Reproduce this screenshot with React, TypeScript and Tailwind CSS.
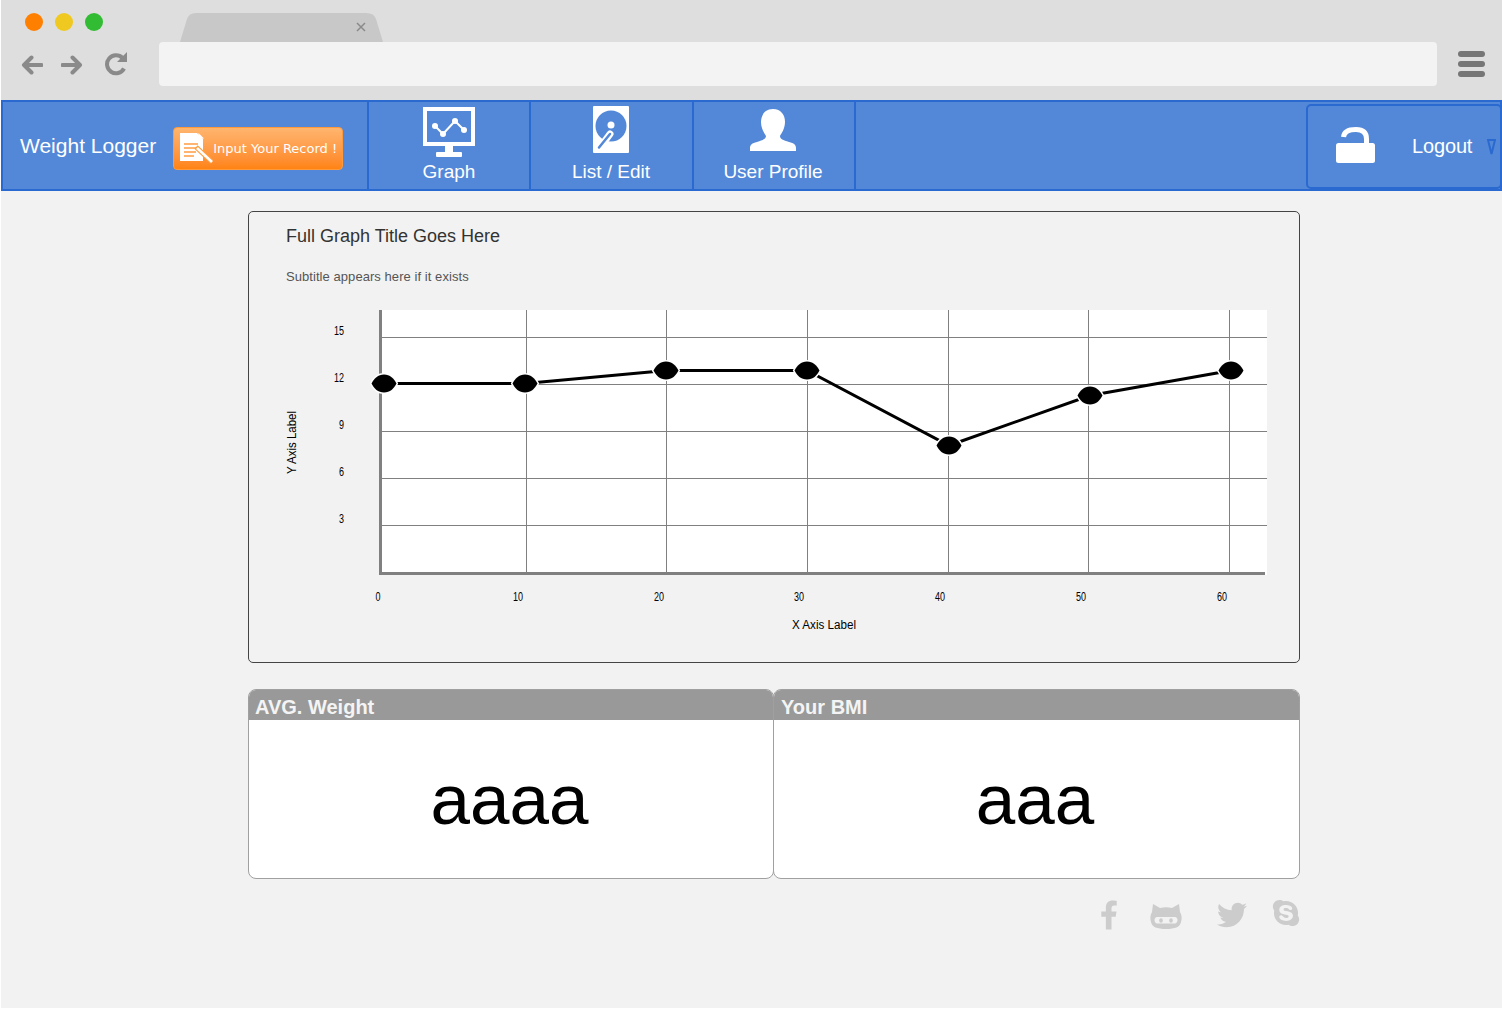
import { FaFacebookF, FaTwitter, FaSkype } from "react-icons/fa";

const pts: [number, number][] = [[4, 73.5], [145, 73.5], [286, 60.5], [427, 60.5], [569, 135.5], [710, 85.5], [851, 60.5]];
const vLines = [146.5, 286.5, 427.5, 568.5, 708.5, 849.5];
const hLines = [27.5, 74.5, 121.5, 168.5, 215.5];
const yTicks: [string, number][] = [["15", 24.5], ["12", 71.5], ["9", 118.5], ["6", 165.5], ["3", 212.5]];
const xTicks: [string, number][] = [["0", -2], ["10", 138], ["20", 279], ["30", 419], ["40", 560], ["50", 701], ["60", 842]];

function Chart() {
  return (
    <svg width="1000" height="340" viewBox="-94 0 1000 340" className="block" style={{ fontFamily: '"Liberation Sans", sans-serif' }}>
      <rect x="0" y="0" width="887" height="265" fill="#ffffff" />
      {vLines.map((x) => (
        <line key={x} x1={x} x2={x} y1="0" y2="263" stroke="#808080" strokeWidth="1" />
      ))}
      {hLines.map((y) => (
        <line key={y} x1="0" x2="887" y1={y} y2={y} stroke="#808080" strokeWidth="1" />
      ))}
      <rect x="-1" y="0" width="3" height="265" fill="#808080" />
      <rect x="-1" y="262" width="886" height="3" fill="#808080" />
      <polyline points={pts.map((p) => p.join(",")).join(" ")} fill="none" stroke="#000000" strokeWidth="3" />
      {pts.map(([x, y]) => (
        <path
          key={x}
          d={`M${x - 12.5} ${y}C${x - 10} ${y - 5} ${x - 6} ${y - 9} ${x} ${y - 9}C${x + 6} ${y - 9} ${x + 10} ${y - 5} ${x + 12.5} ${y}C${x + 10} ${y + 5} ${x + 6} ${y + 9} ${x} ${y + 9}C${x - 6} ${y + 9} ${x - 10} ${y + 5} ${x - 12.5} ${y}Z`}
          fill="#000000"
          stroke="#ffffff"
          strokeWidth="3"
          style={{ paintOrder: "stroke" }}
        />
      ))}
      {yTicks.map(([t, y]) => (
        <text key={t} x="-36" y={y} textAnchor="end" fontSize="12.500" fill="#000" textLength={t.length * 5} lengthAdjust="spacingAndGlyphs">
          {t}
        </text>
      ))}
      {xTicks.map(([t, x]) => (
        <text key={t} x={x} y="290.500" textAnchor="middle" fontSize="12.500" fill="#000" textLength={t.length * 5} lengthAdjust="spacingAndGlyphs">
          {t}
        </text>
      ))}
      <text x="412" y="318.500" fontSize="12" fill="#000" textAnchor="start" textLength="64" lengthAdjust="spacingAndGlyphs">
        X Axis Label
      </text>
      <text transform="translate(-84 164) rotate(-90)" fontSize="12" fill="#000" textLength="63" lengthAdjust="spacingAndGlyphs">
        Y Axis Label
      </text>
    </svg>
  );
}

function Stat({ title, value, className, headClass }: { title: string; value: string; className: string; headClass: string }) {
  return (
    <div className={`flex flex-col overflow-hidden rounded-lg bg-white border border-[#a0a0a0] ${className}`}>
      <div className={`h-[31px] bg-[#999999] -mt-px -mx-px text-[20px] leading-[36px] font-bold text-[#f4f4f4] ${headClass}`}>{title}</div>
      <div className="flex-1 flex items-center justify-center text-[71px] leading-none text-black pr-[3px]">{value}</div>
    </div>
  );
}

function Octocat() {
  return (
    <svg width="32" height="27" viewBox="0 0 32 27">
      <path
        fill="#cccccc"
        d="M3 1l7 4c4-1 8-1 12 0l7-4 1 8c2 3 2 7 1 10-1 5-6 7-15 7S2 24 1 19C0 16 0 12 2 9z"
      />
      <path fill="#f2f2f2" d="M7 14h18c1.500 0 2.500 1.500 2.500 3s-1 3.500-2.500 3.500H7c-1.500 0-2.500-2-2.500-3.500S5.500 14 7 14z" />
      <ellipse cx="11" cy="17.500" rx="1.800" ry="2.200" fill="#cccccc" />
      <ellipse cx="21" cy="17.500" rx="1.800" ry="2.200" fill="#cccccc" />
    </svg>
  );
}

function NavItem({ label, icon, className }: { label: string; icon: React.ReactNode; className: string }) {
  return (
    <div className={`flex flex-col items-center border-r-2 border-[#2a69cf] ${className}`}>
      <div className="h-[56px] pt-[4px] flex justify-center">{icon}</div>
      <div className="text-[19px] leading-[26px] text-white mt-px">{label}</div>
    </div>
  );
}

export default function App() {
  return (
    <div className="w-full h-[1010px] overflow-hidden bg-white pl-px" style={{ fontFamily: '"Liberation Sans", Arial, sans-serif' }}>
      <div className="h-[1008px] bg-[#f2f2f2]">
        {/* browser chrome */}
        <div className="h-[100px] bg-[#dedede]">
          <div className="h-[42px] flex items-start">
            <div className="flex gap-[12px] pl-[24px] pt-[13px]">
              <div className="w-[18px] h-[18px] rounded-full bg-[#ff7f00]" />
              <div className="w-[18px] h-[18px] rounded-full bg-[#efc91f]" />
              <div className="w-[18px] h-[18px] rounded-full bg-[#31bc33]" />
            </div>
            <div className="relative ml-[77px] mt-[13px] w-[203px] h-[29px]">
              <svg width="203" height="29" viewBox="0 0 203 29" className="block">
                <path d="M0 29L7 6Q9 0 16 0H186Q194 0 196 6L203 29Z" fill="#c8c8c8" />
              </svg>
              <svg width="10" height="10" viewBox="0 0 10 10" className="absolute right-[17px] top-[9px]">
                <path d="M1 1L9 9M9 1L1 9" stroke="#8a8a8a" strokeWidth="1.500" />
              </svg>
            </div>
          </div>
          <div className="h-[44px] flex items-center">
            <div className="w-[158px] flex items-center pl-[20px] h-full">
              <svg width="22" height="22" viewBox="0 0 22 22" className="block mt-[2px]">
                <path d="M20.500 11H3M10.500 3.500L3 11L10.500 18.500" fill="none" stroke="#8a8a8a" strokeWidth="4" strokeLinejoin="round" strokeLinecap="round" />
              </svg>
              <svg width="22" height="22" viewBox="0 0 22 22" className="block ml-[18px] mt-[2px]">
                <path d="M1.500 11H19M11.500 3.500L19 11L11.500 18.500" fill="none" stroke="#8a8a8a" strokeWidth="4" strokeLinejoin="round" strokeLinecap="round" />
              </svg>
              <svg width="24" height="24" viewBox="0 0 24 24" className="block ml-[21px]">
                <path d="M20 16.500A9 9 0 1 1 18.500 6" fill="none" stroke="#8a8a8a" strokeWidth="4" />
                <path d="M13 10H23V0Z" fill="#8a8a8a" />
              </svg>
            </div>
            <div className="w-[1278px] h-full bg-[#f3f3f3] rounded" />
            <div className="ml-[21px] w-[27px] flex flex-col gap-[4px]">
              <div className="h-[6px] rounded-[3px] bg-[#767676]" />
              <div className="h-[6px] rounded-[3px] bg-[#767676]" />
              <div className="h-[6px] rounded-[3px] bg-[#767676]" />
            </div>
          </div>
        </div>

        {/* nav */}
        <div className="h-[91px] border-2 border-[#2a69cf] bg-[#5388d8] flex">
          <div className="w-[366px] shrink-0 flex items-center border-r-2 border-[#2a69cf] pl-[17px]">
            <div className="text-[21px] text-white leading-none -mt-px">Weight Logger</div>
            <div className="ml-[17px] mt-[5px] w-[170px] h-[43px] rounded-[4px] border border-[#ff9a3c] bg-linear-to-b from-[#ffb56d] to-[#ff8311] flex items-center pl-[5px]">
              <svg width="34" height="34" viewBox="0 0 34 34" className="shrink-0 block">
                <path d="M1 2H18L24 8V30H1Z" fill="#fff" />
                <path d="M19.500 2L25 7.500H19.500Z" fill="#fff" />
                <path d="M5 13H19M5 17H21M5 21H17M5 25H15" stroke="#ff9d42" strokeWidth="1.600" />
                <path d="M17 16L33 31" stroke="#ff9d42" strokeWidth="5" />
                <path d="M18 17L33 31" stroke="#fff" strokeWidth="2.500" />
              </svg>
              <span className="text-[13px] text-white whitespace-nowrap mt-[2px]" style={{ fontFamily: '"DejaVu Sans", sans-serif' }}>
                Input Your Record !
              </span>
            </div>
          </div>
          <NavItem
            label="Graph"
            className="w-[162px]"
            icon={
              <svg width="52" height="52" viewBox="0 0 52 52" className="block mt-px">
                <path fillRule="evenodd" d="M0 0H52V39H0ZM4 4V35H48V4Z" fill="#fff" />
                <rect x="22" y="39" width="8" height="6" fill="#fff" />
                <rect x="13" y="45" width="26" height="5" rx="1" fill="#fff" />
                <polyline points="12,19 20,27 32,14 41,23" fill="none" stroke="#fff" strokeWidth="2" />
                <circle cx="12" cy="19" r="3" fill="#fff" />
                <circle cx="20" cy="27" r="3" fill="#fff" />
                <circle cx="32" cy="14" r="3" fill="#fff" />
                <circle cx="41" cy="23" r="3" fill="#fff" />
              </svg>
            }
          />
          <NavItem
            label="List / Edit"
            className="w-[163px] pr-px"
            icon={
              <svg width="36" height="47" viewBox="0 0 36 47" className="block">
                <rect width="36" height="47" rx="1" fill="#fff" />
                <circle cx="18" cy="20" r="15.500" fill="#5388d8" />
                <circle cx="18" cy="19" r="3.500" fill="#fff" />
                <path d="M7 41.500L17 28" stroke="#fff" strokeWidth="7" strokeLinecap="round" />
                <path d="M6 41.500L17 28" stroke="#5388d8" strokeWidth="2.500" strokeLinecap="round" />
              </svg>
            }
          />
          <NavItem
            label="User Profile"
            className="w-[162px] pr-[2px]"
            icon={
              <svg width="48" height="46" viewBox="0 0 48 46" className="block mt-px">
                <path d="M24 2C32 2 36 8 36 15C36 22 32 27 31 29C31 32 34 33 40 35C45 36 47 38 47 41L47 44H1V41C1 38 3 36 8 35C14 33 17 32 17 29C16 27 12 22 12 15C12 8 16 2 24 2Z" fill="#fff" />
              </svg>
            }
          />
          <div className="flex-1" />
          <div className="w-[196px] h-[85px] mt-[2px] -mr-[2px] rounded-[5px] border-2 border-[#2a69cf] flex items-center pl-[28px]">
            <svg width="40" height="36" viewBox="0 0 40 36" className="block shrink-0 -mt-[3px]">
              <path d="M7.500 10C8 5 13 2.500 20 2.500C27 2.500 30.500 6 30.500 12V18" fill="none" stroke="#fff" strokeWidth="5" />
              <rect y="16" width="39" height="20" rx="2.500" fill="#fff" />
            </svg>
            <div className="ml-[36px] text-[20px] text-white tracking-[-0.15px] -mt-[2px]">Logout</div>
            <svg width="9" height="16" viewBox="0 0 9 16" className="block ml-[15px] shrink-0">
              <path d="M1 1H8L4.500 15Z" fill="none" stroke="#2a69cf" strokeWidth="2" />
            </svg>
          </div>
        </div>

        {/* content */}
        <div className="w-[1052px] ml-[247px] pt-[20px]">
          <div className="h-[452px] rounded-[5px] border border-[#444444] pl-[37px] relative">
            <div className="text-[18px] leading-[20px] text-[#333333] pt-[14px]">Full Graph Title Goes Here</div>
            <div className="text-[13px] leading-[16px] text-[#555555] mt-[23px] tracking-[0.06px]">Subtitle appears here if it exists</div>
            <div className="mt-[25px]">
              <Chart />
            </div>
          </div>

          <div className="grid grid-cols-2 mt-[26px] h-[190px]">
            <Stat title="AVG. Weight" value="aaaa" className="" headClass="pl-[7px]" />
            <Stat title="Your BMI" value="aaa" className="-ml-px" headClass="pl-[8px]" />
          </div>

          <div className="flex items-start justify-end pt-[20px]">
            <FaFacebookF className="text-[#cccccc] w-[18px] h-[32px]" />
            <div className="ml-[32px] mt-[4px]">
              <Octocat />
            </div>
            <FaTwitter className="text-[#cccccc] w-[30px] h-[30px] ml-[35px] mt-px" />
            <FaSkype className="text-[#cccccc] w-[28px] h-[30px] ml-[25px] -mt-px" />
          </div>
        </div>
      </div>
    </div>
  );
}
